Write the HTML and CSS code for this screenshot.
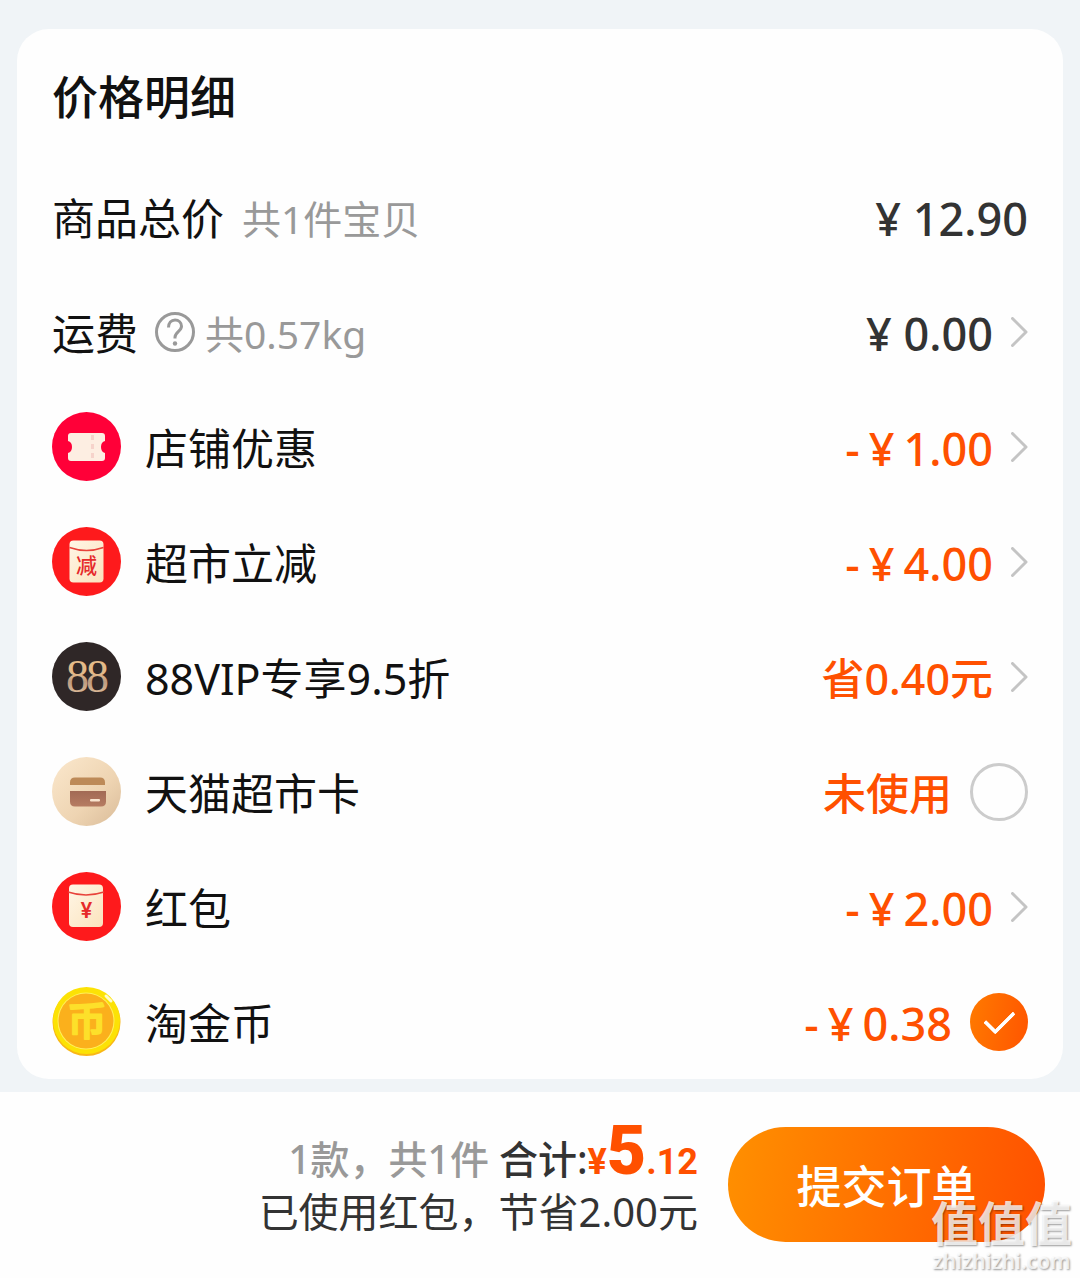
FILE: index.html
```html
<!DOCTYPE html>
<html lang="zh-CN">
<head>
<meta charset="utf-8">
<meta name="viewport" content="width=device-width, initial-scale=1">
<title>价格明细</title>
<link rel="stylesheet" href="styles.css">
</head>
<body>
<main class="card">
  <h1 class="card-title">价格明细</h1>
  <ul class="rows">
    <li class="row">
      <span class="label">商品总价</span>
      <span class="note note-wide">共1件宝贝</span>
      <span class="value"><span class="amount">¥ 12.90</span></span>
    </li>
    <li class="row">
      <span class="label">运费</span>
      <button class="help" type="button" aria-label="运费说明">
        <svg class="help-icon" viewBox="0 0 40 40" aria-hidden="true">
          <circle cx="20" cy="20" r="18.5"/>
          <path d="M13.500 15.500c0-4.500 2.800-7.500 6.500-7.500s6.500 2.600 6.500 6.200c0 5-6.500 5.800-6.500 11v1.300"/>
          <circle class="dot" cx="20" cy="31.500" r="2.200"/>
        </svg>
      </button>
      <span class="note">共0.57kg</span>
      <button class="value" type="button"><span class="amount">¥ 0.00</span><svg class="chevron" viewBox="0 0 17 30" aria-hidden="true"><path d="M1.500 1.500 15 15 1.500 28.500"/></svg></button>
    </li>
    <li class="row">
      <svg class="icon" viewBox="0 0 69 69" aria-hidden="true">
        <circle cx="34.500" cy="34.500" r="34.500" fill="#ff0038"/>
        <path d="M19 21h31q3 0 3 3v5q-4 1-4 6t4 6v5q0 3-3 3H19q-3 0-3-3v-5q4-1 4-6t-4-6v-5q0-3 3-3z" fill="#fdeee2"/>
        <path d="M40.500 23v24" fill="none" stroke="#f6d3cb" stroke-width="3" stroke-dasharray="5 4"/>
      </svg>
      <span class="label">店铺优惠</span>
      <button class="value accent" type="button"><span class="amount"><span>-</span><span>¥</span><span>1.00</span></span><svg class="chevron" viewBox="0 0 17 30" aria-hidden="true"><path d="M1.500 1.500 15 15 1.500 28.500"/></svg></button>
    </li>
    <li class="row">
      <svg class="icon" viewBox="0 0 69 69" aria-hidden="true">
        <defs>
          <linearGradient id="envelope" x1="0" y1="0" x2="1" y2="1"><stop offset="0" stop-color="#fff6e6"/><stop offset="1" stop-color="#fbe3bd"/></linearGradient>
        </defs>
        <circle cx="34.500" cy="34.500" r="34.500" fill="#fe1a1c"/>
        <rect x="17.500" y="13.500" width="34" height="42" rx="4" fill="url(#envelope)"/>
        <path d="M17.500 20.500q17 6 34 0" fill="none" stroke="#e8423a" stroke-width="1.500"/>
        <text class="icon-text" x="34.500" y="46" font-size="21" fill="#e62a2a">减</text>
      </svg>
      <span class="label">超市立减</span>
      <button class="value accent" type="button"><span class="amount"><span>-</span><span>¥</span><span>4.00</span></span><svg class="chevron" viewBox="0 0 17 30" aria-hidden="true"><path d="M1.500 1.500 15 15 1.500 28.500"/></svg></button>
    </li>
    <li class="row">
      <svg class="icon" viewBox="0 0 69 69" aria-hidden="true">
        <defs>
          <linearGradient id="gold" x1="0" y1="0" x2="0" y2="1"><stop offset="0" stop-color="#e6bd86"/><stop offset=".45" stop-color="#e2b98a"/><stop offset=".6" stop-color="#bd9a80"/><stop offset="1" stop-color="#efcfa6"/></linearGradient>
        </defs>
        <circle cx="34.500" cy="34.500" r="34.500" fill="#2f2727"/>
        <text class="icon-digits" x="25.500 45.500" y="50" font-size="46" fill="url(#gold)">88</text>
      </svg>
      <span class="label">88VIP专享9.5折</span>
      <button class="value accent" type="button"><span class="status">省0.40元</span><svg class="chevron" viewBox="0 0 17 30" aria-hidden="true"><path d="M1.500 1.500 15 15 1.500 28.500"/></svg></button>
    </li>
    <li class="row">
      <svg class="icon" viewBox="0 0 69 69" aria-hidden="true">
        <defs>
          <linearGradient id="sand" x1="0" y1="0" x2="1" y2="1"><stop offset="0" stop-color="#fbe8cd"/><stop offset=".6" stop-color="#eed4b2"/><stop offset="1" stop-color="#d9bb98"/></linearGradient>
          <linearGradient id="wallet" x1="0" y1="0" x2="0" y2="1"><stop offset="0" stop-color="#a26a55"/><stop offset="1" stop-color="#b67c62"/></linearGradient>
        </defs>
        <circle cx="34.500" cy="34.500" r="34.500" fill="url(#sand)"/>
        <path d="M18 28v-2.500q0-5 5-5h25q5 0 5 5V28z" fill="#bd8a58"/>
        <path d="M18 34h36v10.500q0 5-5 5H23q-5 0-5-5z" fill="url(#wallet)"/>
        <rect x="38" y="42" width="10" height="2.500" rx="1" fill="#f9e4cf"/>
      </svg>
      <label class="label" for="supermarket-card">天猫超市卡</label>
      <span class="value accent"><span class="status">未使用</span><input class="check" type="checkbox" id="supermarket-card"></span>
    </li>
    <li class="row">
      <svg class="icon" viewBox="0 0 69 69" aria-hidden="true">
        <circle cx="34.500" cy="34.500" r="34.500" fill="#fe1a1c"/>
        <rect x="17" y="12.500" width="34" height="42.500" rx="4" fill="url(#envelope)"/>
        <path d="M16 20q18 6 36 0" fill="none" stroke="#e8423a" stroke-width="1.500"/>
        <text class="icon-yen" x="34.500" y="45.500" font-size="21" fill="#e62a2a">¥</text>
      </svg>
      <span class="label">红包</span>
      <button class="value accent" type="button"><span class="amount"><span>-</span><span>¥</span><span>2.00</span></span><svg class="chevron" viewBox="0 0 17 30" aria-hidden="true"><path d="M1.500 1.500 15 15 1.500 28.500"/></svg></button>
    </li>
    <li class="row">
      <svg class="icon" viewBox="0 0 69 69" aria-hidden="true">
        <circle cx="34.500" cy="35" r="34" fill="#f9b717"/>
        <circle cx="34.500" cy="33.500" r="33.500" fill="#fce205"/>
        <circle cx="34" cy="34" r="28.500" fill="#fff05a"/>
        <circle cx="34" cy="34" r="27.500" fill="#fbb01c"/>
        <path d="M54 9l5 5" stroke="#fffbc8" stroke-width="3" stroke-linecap="round"/>
        <text class="icon-text coin-text" x="35" y="48" font-size="39">币</text>
      </svg>
      <label class="label" for="coins">淘金币</label>
      <span class="value accent"><span class="amount"><span>-</span><span>¥</span><span>0.38</span></span><input class="check" type="checkbox" id="coins" checked></span>
    </li>
  </ul>
</main>
<footer class="bar">
  <div class="summary">
    <p class="total"><span class="count">1款，共1件</span><span class="total-label">合计:</span><span class="price">¥<strong class="price-main">5</strong>.12</span></p>
    <p class="saved">已使用红包，节省2.00元</p>
  </div>
  <button class="submit" type="submit">提交订单</button>
  <div class="watermark"><span class="watermark-name">值值值</span><span class="watermark-site">zhizhizhi.com</span></div>
</footer>
</body>
</html>
```
FILE: styles.css
```css
* { box-sizing: border-box; }

body {
  margin: 0;
  min-height: 100vh;
  display: flex;
  flex-direction: column;
  background: #f0f4f7;
  color: #111;
  font-family: "Noto Sans", "Noto Sans CJK SC", sans-serif;
  font-size: 43px;
  line-height: 60px;
}

button { font: inherit; color: inherit; background: none; border: 0; padding: 0; cursor: pointer; }
p { margin: 0; }

.card {
  margin: 29px 17px 13px;
  padding: 0 35px;
  background: #fefefe;
  border-radius: 32px;
}
.card-title { margin: 0; height: 130px; padding-top: 37px; font-size: 46px; font-weight: 500; }

.rows { list-style: none; margin: 0; padding: 0; }
.row { display: flex; align-items: center; height: 115px; white-space: nowrap; }
.icon { width: 69px; height: 69px; margin-right: 24px; flex: none; }
.icon-text { font-family: "Noto Sans CJK SC", sans-serif; font-weight: 500; text-anchor: middle; }
.icon-yen { font-family: Inter, sans-serif; font-weight: 600; text-anchor: middle; }
.icon-digits { font-family: "Liberation Serif", serif; text-anchor: middle; }
.coin-text { fill: #fde02a; stroke: #fde02a; stroke-width: 2; stroke-linejoin: round; }

.label, .note, .status, .amount { padding-top: 4px; }
.help { display: flex; margin: 0 10px 0 17px; }
.help-icon { width: 40px; height: 40px; fill: none; stroke: #999; stroke-width: 3; }
.help-icon .dot { fill: #999; stroke: none; }
.note { color: #999; font-size: 39px; }
.note-wide { margin-left: 18px; }

.value { margin-left: auto; display: flex; align-items: center; gap: 18px; color: #333; font-weight: 500; }
.accent { color: #ff5000; }
.amount { font-size: 45px; }
.accent .amount { display: flex; gap: 9px; }
.chevron { width: 17px; height: 30px; fill: none; stroke: #c4c4c4; stroke-width: 3; stroke-linecap: round; stroke-linejoin: round; }

.check {
  appearance: none;
  width: 58px;
  height: 58px;
  margin: 0;
  border: 3px solid #ccc;
  border-radius: 50%;
  display: grid;
  place-items: center;
}
.check:checked { border: 0; background: linear-gradient(100deg, #ff7a00, #ff5500); }
.check:checked::before {
  content: "";
  width: 25px;
  height: 13px;
  margin-bottom: 7px;
  border: solid #fff;
  border-width: 0 0 4px 4px;
  border-radius: 2px;
  transform: rotate(-45deg);
}

.bar {
  position: relative;
  flex: 1;
  display: flex;
  justify-content: flex-end;
  align-items: flex-start;
  gap: 30px;
  padding: 35px 35px 36px;
  background: #fefefe;
  color: #333;
}
.summary { padding-top: 5px; text-align: right; font-size: 40px; line-height: 53px; white-space: nowrap; }
.total { font-size: 39px; font-weight: 500; }
.count { color: #999; margin-right: 10px; }
.price { color: #ff5000; font-family: Roboto, sans-serif; font-size: 36px; font-weight: 700; line-height: 1; }
.price-main { font-size: 68px; line-height: 0; }
.submit {
  width: 317px;
  height: 115px;
  padding-top: 4px;
  border-radius: 58px;
  background: linear-gradient(100deg, #ff9000, #ff5000);
  color: #fff;
  font-size: 45px;
  font-weight: 500;
}
.watermark {
  position: absolute;
  right: 8px;
  bottom: 4px;
  display: flex;
  flex-direction: column;
  align-items: center;
  color: rgba(255, 255, 255, .8);
  text-shadow: 1px 1px 2px rgba(0, 0, 0, .4);
  pointer-events: none;
}
.watermark-name { font-size: 47px; line-height: 50px; font-weight: 700; }
.watermark-site { font-size: 21px; line-height: 26px; font-weight: 600; }
```
